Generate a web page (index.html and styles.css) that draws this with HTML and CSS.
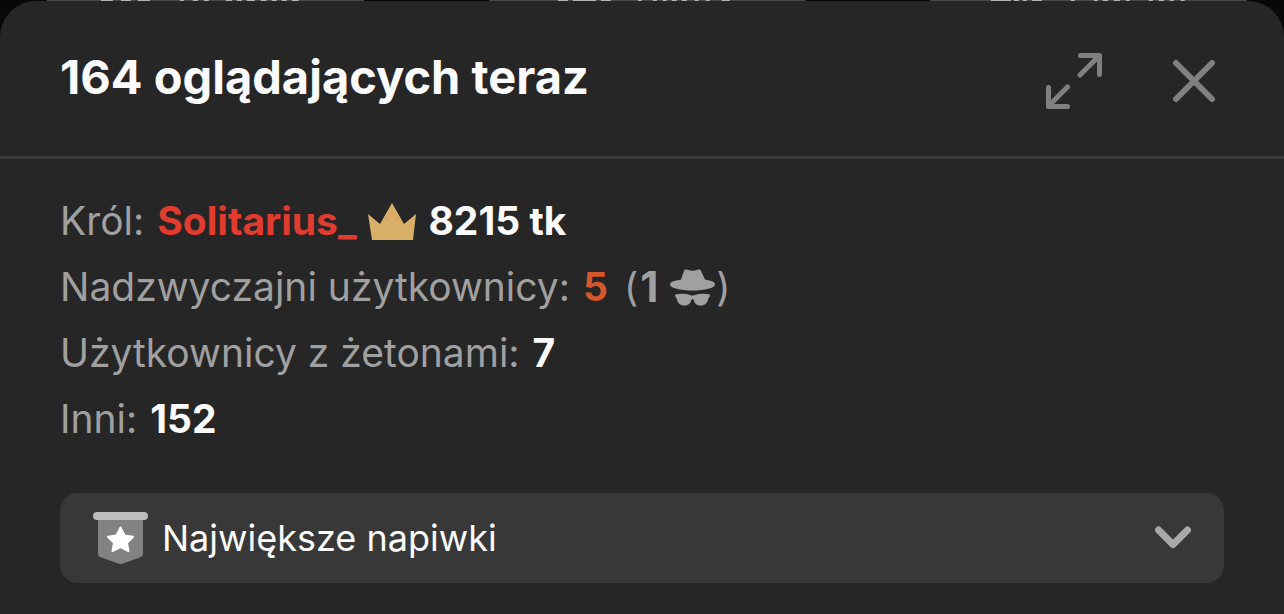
FILE: index.html
```html
<!DOCTYPE html>
<html lang="pl">
<head>
<meta charset="utf-8">
<meta name="viewport" content="width=device-width, initial-scale=1">
<title>164 oglądających teraz</title>
<link rel="stylesheet" href="styles.css">
</head>
<body>
<div class="backdrop" aria-hidden="true">
  <span class="backdrop-tab"><svg viewBox="11 0 317 1"><path d="M65 .5h12M85 .5h10M102 .5h12M144 .5h4M157 .5h5M168 .5h5M190 .5h6M201 .5h5M211 .5h8M225 .5h6M236 .5h5M246 .5h5M256 .5h7"/></svg></span>
  <span class="backdrop-tab"><svg viewBox="0 0 317 1"><path d="M69 .5h10M84 .5h23M112 .5h10M149 .5h4M164 .5h4M174 .5h4M183 .5h5M193 .5h5M206 .5h4M217 .5h4M233 .5h8"/></svg></span>
  <span class="backdrop-tab"><svg viewBox="0 0 317 1"><path d="M61 .5h20M84 .5h5M93 .5h4M102 .5h10M141 .5h4M164 .5h4M173 .5h5M184 .5h6M196 .5h4M219 .5h4M229 .5h5M240 .5h4M251 .5h4"/></svg></span>
</div>
<section class="sheet" aria-labelledby="sheet-title">
  <header class="sheet-header">
    <h1 class="sheet-title" id="sheet-title">164 oglądających teraz</h1>
    <div class="sheet-actions">
      <button class="icon-button" type="button" aria-label="Powiększ">
        <svg class="icon-expand" viewBox="0 0 56 56"><path d="M34.500 2.500H53.500V21.500M53 3L34 22M21.500 34L3 52.500M2.500 34.500V53.500H21.500"/></svg>
      </button>
      <button class="icon-button" type="button" aria-label="Zamknij">
        <svg class="icon-close" viewBox="0 0 44 44"><path d="M4 4L40 40M40 4L4 40"/></svg>
      </button>
    </div>
  </header>
  <div class="sheet-body">
    <dl class="stats">
      <div class="stat">
        <dt>Król:</dt>
        <dd class="king">
          <a class="king-name" href="#">Solitarius_</a>
          <svg class="icon-crown" viewBox="0 0 48 37"><path d="M0 11L12 21L24 0L36 21L48 11L45 37H4Z"/></svg>
          <span>8215 tk</span>
        </dd>
      </div>
      <div class="stat">
        <dt>Nadzwyczajni użytkownicy:</dt>
        <dd class="premium">
          <span class="premium-count">5</span>
          <span class="hidden-users"><span>(</span><b class="hidden-count">1</b><svg class="icon-incognito" viewBox="0 0 46 37"><path d="M0 15.500C0 12.500 6 11.500 11 10.500L14 2C14.500 .5 16 .3 18 1Q23 2.500 27 1C29 .3 30.500 .5 31 2L35 10.500C40 11.500 45 12.500 45 15.500C45 19 35 21.500 22.500 21.500S0 19 0 15.500Z"/><path d="M5 25.500Q14 24 20 26Q22.500 27 25 26Q31 24 40 25.500L39.500 28L38.500 29C37.500 34 35 36.500 30.500 36.500C26 36.500 24.500 34 23.500 30.500Q22.500 29.500 21.500 30.500C20.500 34 19 36.500 14.500 36.500C10 36.500 7.500 34 6.500 29L5.500 28Z"/></svg><span>)</span></span>
        </dd>
      </div>
      <div class="stat">
        <dt>Użytkownicy z żetonami:</dt>
        <dd>7</dd>
      </div>
      <div class="stat">
        <dt>Inni:</dt>
        <dd>152</dd>
      </div>
    </dl>
    <button class="tips-toggle" type="button" aria-expanded="false">
      <svg class="icon-badge" viewBox="0 0 56 52"><path class="badge-cloth" d="M5 5H50V42Q50 44 48 45L30 51.500Q27.500 52.400 25 51.500L7 45Q5 44 5 42Z"/><rect class="badge-bar" width="55" height="8" rx="4"/><path class="badge-star" d="M27.500 15.500L31.500 23.500L40 24.800L34 31L35.500 39L27.500 35.200L19.500 39L21 31L15 24.800L23.500 23.500Z"/></svg>
      <span class="tips-label">Największe napiwki</span>
      <svg class="icon-chevron" viewBox="0 0 36 24"><path d="M3.500 4L18 18.500L32.500 4"/></svg>
    </button>
  </div>
</section>
</body>
</html>
```
FILE: styles.css
```css
* {
  box-sizing: border-box;
}

body {
  margin: 0;
  min-height: 100vh;
  display: flex;
  flex-direction: column;
  background: #080808;
  color: #fafafa;
  font-family: Inter, "Liberation Sans", sans-serif;
}

.backdrop {
  display: flex;
  gap: 125px;
  height: 1px;
  padding: 0 37px 0 47px;
}

.backdrop-tab {
  flex: 1;
  background: #484848;
}

.backdrop-tab svg {
  display: block;
  width: 100%;
  height: 1px;
}

.backdrop-tab path {
  stroke: #b5b5b5;
  stroke-width: 1;
}

.sheet {
  flex: 1;
  background: #262626;
  border-radius: 36px 36px 0 0;
}

.sheet-header {
  display: flex;
  align-items: center;
  justify-content: space-between;
  height: 158px;
  padding: 4px 68px 0 60px;
  border-bottom: 3px solid #3a3a3a;
}

.sheet-title {
  margin: 0;
  padding-bottom: 8px;
  font-size: 47px;
  font-weight: 700;
  line-height: 60px;
}

.sheet-actions {
  display: flex;
  align-items: center;
  gap: 70px;
}

.icon-button {
  display: flex;
  padding: 0;
  border: 0;
  background: none;
  cursor: pointer;
}

.icon-button path {
  fill: none;
  stroke: #808080;
  stroke-linecap: round;
  stroke-linejoin: round;
}

.icon-expand {
  width: 56px;
  height: 56px;
  stroke-width: 5;
}

.icon-close {
  width: 44px;
  height: 44px;
  stroke-width: 6;
}

.sheet-body {
  padding: 29px 60px 31px;
}

.stats {
  margin: 0 0 41px;
  font-size: 39px;
  line-height: 66px;
}

.stat {
  display: flex;
  gap: 13px;
}

.stat dt {
  color: #a0a0a0;
}

.stat dd {
  margin: 0;
  font-weight: 700;
}

.stat .king,
.stat .premium,
.hidden-users {
  display: flex;
  align-items: center;
}

.king {
  gap: 12px;
}

.king-name {
  color: #e23c30;
  text-decoration: none;
}

.icon-crown {
  width: 48px;
  height: 37px;
  fill: #d9ae67;
}

.premium {
  gap: 16px;
}

.premium-count {
  color: #d4572b;
}

.hidden-users {
  color: #a0a0a0;
  font-weight: 400;
}

.hidden-count {
  margin: 0 12px 0 2px;
  font-size: 42px;
}

.icon-incognito {
  width: 46px;
  height: 37px;
  fill: #a0a0a0;
}

.tips-toggle {
  display: flex;
  align-items: center;
  width: 100%;
  height: 90px;
  padding: 0 33px;
  border: 0;
  border-radius: 18px;
  background: #383838;
  color: #fafafa;
  font: inherit;
  font-size: 36px;
  text-align: left;
  cursor: pointer;
}

.tips-label {
  flex: 1;
  padding-left: 13px;
}

.icon-badge {
  width: 56px;
  height: 52px;
}

.badge-cloth {
  fill: #828282;
}

.badge-bar {
  fill: #bdbdbd;
}

.badge-star {
  fill: #ffffff;
  stroke: #ffffff;
  stroke-width: 2;
  stroke-linejoin: round;
}

.icon-chevron {
  width: 36px;
  height: 24px;
  fill: none;
  stroke: #a8a8a8;
  stroke-width: 7;
  stroke-linecap: round;
  stroke-linejoin: round;
}
```
